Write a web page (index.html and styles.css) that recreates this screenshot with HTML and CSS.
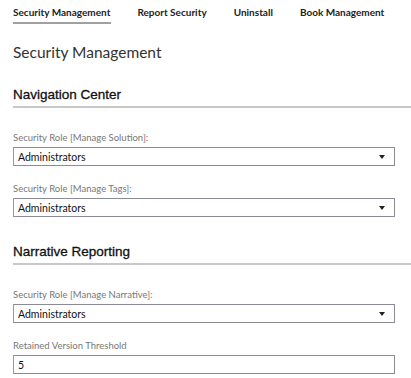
FILE: index.html
```html
<!DOCTYPE html>
<html lang="en">
<head>
    <meta charset="UTF-8">
    <meta name="viewport" content="width=device-width, initial-scale=1.0">
    <title>Security Management</title>
    <link rel="stylesheet" href="styles.css">
</head>
<body>

    <!-- Tabs -->
    <nav class="tabs">
        <a class="tab active">Security Management</a>
        <a class="tab">Report Security</a>
        <a class="tab">Uninstall</a>
        <a class="tab">Book Management</a>
    </nav>

    <h1 class="page-title">Security Management</h1>

    <!-- Navigation Center -->
    <section class="section">
        <h2 class="section-title">Navigation Center</h2>
        <div class="field">
            <label>Security Role [Manage Solution]:</label>
            <div class="select">
                <span>Administrators</span>
                <span class="caret"></span>
            </div>
        </div>
        <div class="field">
            <label>Security Role [Manage Tags]:</label>
            <div class="select">
                <span>Administrators</span>
                <span class="caret"></span>
            </div>
        </div>
    </section>

    <!-- Narrative Reporting -->
    <section class="section">
        <h2 class="section-title">Narrative Reporting</h2>
        <div class="field">
            <label>Security Role [Manage Narrative]:</label>
            <div class="select">
                <span>Administrators</span>
                <span class="caret"></span>
            </div>
        </div>
        <div class="field">
            <label>Retained Version Threshold</label>
            <div class="select">
                <span>5</span>
            </div>
        </div>
    </section>

</body>
</html>
```

FILE: styles.css
```css
body {
    margin: 0;
    padding: 0 0 0 13px;
    font-family: Lato, "Open Sans", sans-serif;
    background: #fff;
    color: #222;
}
.tabs {
    display: flex;
    gap: 26px;
    padding-top: 6px;
}
.tab {
    font-size: 10px;
    font-weight: bold;
    color: #222;
    padding: 0 1px 4px 0;
    border-bottom: 2px solid transparent;
}
.tab.active {
    border-bottom-color: #a0a0a0;
}
.page-title {
    font-size: 15.5px;
    font-weight: normal;
    color: #333;
    margin: 19px 0 0;
}
.section-title {
    font-family: "Liberation Sans", Arial, sans-serif;
    font-size: 13.5px;
    font-weight: normal;
    color: #111;
    -webkit-text-stroke: 0.3px #111;
    margin: 0;
    padding-bottom: 4px;
    border-bottom: 2px solid #c8c8c8;
}
.section {
    margin-top: 26px;
}
.section + .section {
    margin-top: 27px;
}
.field {
    width: 382px;
    margin-top: 17px;
}
.section-title + .field {
    margin-top: 24px;
}
.field label {
    display: block;
    font-size: 9.5px;
    color: #777;
    margin-bottom: 4px;
}
.select {
    display: flex;
    align-items: center;
    justify-content: space-between;
    height: 17px;
    padding: 0 9px 0 4px;
    border: 1px solid #8a8a99;
    border-left-color: #9a9a9a;
    font-size: 10.5px;
    color: #111;
}
.caret {
    width: 0;
    height: 0;
    border-left: 3px solid transparent;
    border-right: 3px solid transparent;
    border-top: 4px solid #222;
}
```
